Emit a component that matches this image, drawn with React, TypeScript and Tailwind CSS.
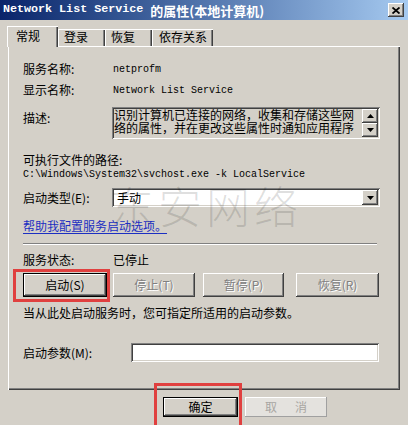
import React from "react";

const raised =
  "shadow-[inset_-1px_-1px_#404040,inset_1px_1px_#ffffff,inset_-2px_-2px_#808080,inset_2px_2px_#d4d0c8]";
const sunken =
  "shadow-[inset_1px_1px_#808080,inset_-1px_-1px_#ffffff,inset_2px_2px_#404040,inset_-2px_-2px_#d4d0c8]";
const mono = "font-['Liberation_Mono',monospace]";

function UpArrow() {
  return (
    <svg width="7" height="4" viewBox="0 0 7 4">
      <polygon points="3.5,0 7,4 0,4" fill="#000" />
    </svg>
  );
}
function DownArrow() {
  return (
    <svg width="7" height="4" viewBox="0 0 7 4">
      <polygon points="0,0 7,0 3.5,4" fill="#000" />
    </svg>
  );
}

function Btn({
  label,
  width,
  disabled,
  def,
  className = "",
}: {
  label: string;
  width: string;
  disabled?: boolean;
  def?: boolean;
  className?: string;
}) {
  return (
    <div
      className={`${width} h-full flex ${def ? "border border-black" : ""} ${className}`}
    >
      <div
        className={`flex-1 flex items-center justify-center bg-[#d4d0c8] ${raised} ${
          disabled ? "text-[#808080] [text-shadow:1px_1px_0_#ffffff]" : "text-black"
        }`}
      >
        <span className="leading-none">{label}</span>
      </div>
    </div>
  );
}

export default function App() {
  return (
    <div className="relative w-[408px] h-[425px] overflow-hidden bg-[#d4d0c8] font-['Noto_Sans_CJK_SC',sans-serif] text-[12px] text-black">
      {/* Title bar */}
      <div className="h-[20px] flex items-center bg-gradient-to-r from-[#0a246a] to-[#a6caf0] pl-[3px] pr-[4px]">
        <span className={`${mono} font-bold text-[11.7px] text-white leading-none whitespace-pre`}>
          Network List Service{" "}
        </span>
        <span className="font-bold text-[13px] text-white leading-none">的属性(本地计算机)</span>
        <div className={`ml-auto w-[16px] h-[14px] bg-[#d4d0c8] ${raised} flex items-center justify-center`}>
          <svg width="8" height="7" viewBox="0 0 8 7">
            <path d="M0.5 0.5 L7.5 6.5 M7.5 0.5 L0.5 6.5" stroke="#000" strokeWidth="1.8" />
          </svg>
        </div>
      </div>

      {/* Tabs */}
      <div className="h-[26px] flex items-end pl-[7px]">
        <div className="relative z-10 -mb-[1px] w-[51px] h-[21px] bg-[#d4d0c8] shadow-[inset_1px_1px_#ffffff,inset_-1px_0_#404040,inset_-2px_0_#808080] flex items-start pl-[9px] pt-[3px]">
          <span className="leading-[14px]">常规</span>
        </div>
        <div className="w-[47px] h-[17px] bg-[#d4d0c8] shadow-[inset_1px_1px_#ffffff,inset_-1px_0_#404040,inset_-2px_0_#808080] flex items-start pl-[6px] pt-[1px]">
          <span className="leading-[14px]">登录</span>
        </div>
        <div className="w-[47px] h-[17px] bg-[#d4d0c8] shadow-[inset_1px_1px_#ffffff,inset_-1px_0_#404040,inset_-2px_0_#808080] flex items-start pl-[6px] pt-[1px]">
          <span className="leading-[14px]">恢复</span>
        </div>
        <div className="w-[61px] h-[17px] bg-[#d4d0c8] shadow-[inset_1px_1px_#ffffff,inset_-1px_0_#404040,inset_-2px_0_#808080] flex items-start pl-[7px] pt-[1px]">
          <span className="leading-[14px]">依存关系</span>
        </div>
      </div>

      {/* Panel */}
      <div
        className={`ml-[8px] w-[392px] h-[344px] bg-[#d4d0c8] shadow-[inset_1px_1px_#ffffff,inset_-1px_-1px_#404040,inset_-2px_-2px_#808080] flex flex-col pl-[15px] pt-[1px]`}
      >
        {/* Row 1 */}
        <div className="mt-[14px] h-[16px] flex items-center">
          <span className="w-[90px]">服务名称:</span>
          <span className={`${mono} text-[10px]`}>netprofm</span>
        </div>
        {/* Row 2 */}
        <div className="mt-[5px] h-[16px] flex items-center">
          <span className="w-[90px]">显示名称:</span>
          <span className={`${mono} text-[10px]`}>Network List Service</span>
        </div>
        {/* Row 3 description */}
        <div className="mt-[9px] h-[32px] flex items-start">
          <span className="w-[89px] pt-[3px] leading-[16px]">描述:</span>
          <div className={`relative w-[268px] h-[32px] bg-[#d4d0c8] ${sunken} flex`}>
            <div className="flex-1 pl-[2px] pt-[1px] text-[12px] leading-[13px] whitespace-nowrap overflow-hidden">
              <div>识别计算机已连接的网络，收集和存储这些网</div>
              <div>络的属性，并在更改这些属性时通知应用程序</div>
            </div>
            <div className="w-[16px] flex flex-col mr-[2px] my-[2px]">
              <div className={`h-[14px] bg-[#d4d0c8] ${raised} flex items-center justify-center`}>
                <UpArrow />
              </div>
              <div className={`h-[14px] bg-[#d4d0c8] ${raised} flex items-center justify-center`}>
                <DownArrow />
              </div>
            </div>
          </div>
        </div>
        {/* Row 4 */}
        <div className="mt-[13px] h-[15px] flex items-center">
          <span>可执行文件的路径:</span>
        </div>
        <div className="h-[14px] flex items-center">
          <span className={`${mono} text-[10px] whitespace-pre`}>C:\Windows\System32\svchost.exe -k LocalService</span>
        </div>
        {/* Row 6 combo */}
        <div className="mt-[7px] h-[19px] flex items-center">
          <span className="w-[89px]">启动类型(E):</span>
          <div className={`w-[268px] h-[19px] bg-white ${sunken} flex items-center p-[2px]`}>
            <span className="flex-1 pl-[3px] leading-none">手动</span>
            <div className={`w-[16px] h-full bg-[#d4d0c8] ${raised} flex items-center justify-center`}>
              <DownArrow />
            </div>
          </div>
        </div>
        {/* Row 7 link */}
        <div className="mt-[11px] h-[16px] flex items-center">
          <span className="text-[#1c2fc2] underline underline-offset-2">帮助我配置服务启动选项。</span>
        </div>
        {/* Separator */}
        <div className="mt-[9px] w-[354px] h-[2px] border-t border-t-[#808080] border-b border-b-white" />
        {/* Status */}
        <div className="mt-[7px] h-[16px] flex items-center">
          <span className="w-[90px]">服务状态:</span>
          <span>已停止</span>
        </div>
        {/* Buttons */}
        <div className="mt-[5px] h-[24px] flex">
          <Btn label="启动(S)" width="w-[84px]" def />
          <Btn label="停止(T)" width="w-[82px]" disabled className="ml-[6px]" />
          <Btn label="暂停(P)" width="w-[81px]" disabled className="ml-[8px]" />
          <Btn label="恢复(R)" width="w-[83px]" disabled className="ml-[12px]" />
        </div>
        {/* Hint */}
        <div className="mt-[8px] h-[16px] flex items-center">
          <span>当从此处启动服务时，您可指定所适用的启动参数。</span>
        </div>
        {/* Params */}
        <div className="mt-[22px] h-[19px] flex items-center">
          <span className="w-[108px]">启动参数(M):</span>
          <div className={`w-[248px] h-[19px] bg-white ${sunken}`} />
        </div>
      </div>

      {/* Bottom buttons */}
      <div className="mt-[7px] h-[20px] flex pl-[163px]">
        <Btn label="确定" width="w-[75px]" def />
        <div className="ml-[7px] w-[82px] h-full bg-[#e4e2de] shadow-[inset_-1px_-1px_#a0a0a0,inset_1px_1px_#ffffff] flex items-center justify-center">
          <span className="text-[#a8a6a2] leading-none tracking-[18px] pl-[18px]">取消</span>
        </div>
      </div>

      {/* Watermark */}
      <div className="absolute left-[110px] top-[183px] text-[44px] leading-[44px] tracking-[4px] font-light text-black/[0.13] pointer-events-none whitespace-nowrap">
        东安网络
      </div>

      {/* Red highlight boxes */}
      <div className="absolute left-[13px] top-[269px] w-[97px] h-[33px] border-[3px] border-[#e0403f] pointer-events-none" />
      <div className="absolute left-[154px] top-[383px] w-[88px] h-[50px] border-[3px] border-[#e0403f] pointer-events-none" />
    </div>
  );
}
